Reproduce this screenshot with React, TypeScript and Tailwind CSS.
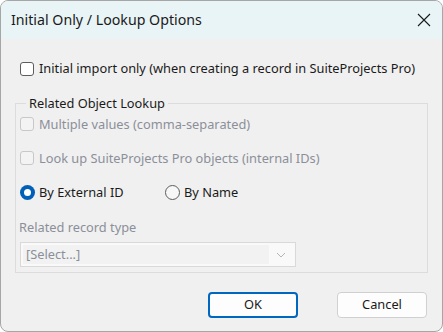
import { useState } from 'react';

const font = { fontFamily: '"Noto Sans", "Segoe UI", sans-serif' };

function Check({ label, disabled, checked, onChange }: { label: string; disabled?: boolean; checked?: boolean; onChange?: () => void }) {
  return (
    <label className={`flex items-center h-[16px] ${disabled ? 'text-[#8b8f99]' : 'text-[#1a1a1a]'}`}>
      <span
        onClick={disabled ? undefined : onChange}
        className={`w-[14px] h-[14px] rounded-[3px] border ${disabled ? 'border-[#c8c8c8] bg-[#f3f3f3]' : 'border-[#5d5d5d] bg-white'} mr-[5px] shrink-0`}
      >
        {checked && (
          <svg viewBox="0 0 14 14" className="w-full h-full">
            <path d="M3 7l3 3 5-6" fill="none" stroke="#1a1a1a" strokeWidth="1.5" />
          </svg>
        )}
      </span>
      {label}
    </label>
  );
}

function Radio({ label, selected, onClick }: { label: string; selected: boolean; onClick: () => void }) {
  return (
    <label className="flex items-center h-[16px] text-[#1a1a1a]" onClick={onClick}>
      {selected ? (
        <span className="w-[15px] h-[15px] rounded-full bg-[#005fb8] flex items-center justify-center mr-[4px] shrink-0">
          <span className="w-[7px] h-[7px] rounded-full bg-white" />
        </span>
      ) : (
        <span className="w-[15px] h-[15px] rounded-full border border-[#5d5d5d] bg-[#f7f7f7] mr-[4px] shrink-0" />
      )}
      {label}
    </label>
  );
}

export default function App() {
  const [initialOnly, setInitialOnly] = useState(false);
  const [mode, setMode] = useState<'ext' | 'name'>('ext');

  return (
    <div className="w-[443px] h-[332px] bg-white" style={font}>
      <div className="w-[443px] h-[332px] rounded-[8px] border border-[#a6a6a6] overflow-hidden flex flex-col bg-[#f0f0f0]">
        {/* title bar */}
        <div className="h-[38px] bg-[#e9f4f7] flex items-center justify-between pl-[10px] pr-[11px] shrink-0">
          <span className="text-[14.2px] text-[#1a1a1a]">Initial Only / Lookup Options</span>
          <svg viewBox="0 0 14 14" className="w-[14px] h-[14px]">
            <path d="M1 1l12 12M13 1L1 13" stroke="#1a1a1a" strokeWidth="1.1" fill="none" />
          </svg>
        </div>

        <div className="flex flex-col pl-[14px] pr-[14px] text-[12.8px]">
          <div className="pl-[5px] pt-[22px]">
            <Check label="Initial import only (when creating a record in SuiteProjects Pro)" checked={initialOnly} onChange={() => setInitialOnly(!initialOnly)} />
          </div>

          {/* group box */}
          <fieldset className="mt-[17px] border border-[#dcdcdc] h-[179px] px-[4px] pb-0 pt-0">
            <legend className="ml-[6px] px-[3px] text-[#1a1a1a]">Related Object Lookup</legend>
            <div className="flex flex-col mt-[3px]">
              <Check label="Multiple values (comma-separated)" disabled />
              <div className="mt-[18px]">
                <Check label="Look up SuiteProjects Pro objects (internal IDs)" disabled />
              </div>
              <div className="flex mt-[18px]">
                <div className="w-[145px]">
                  <Radio label="By External ID" selected={mode === 'ext'} onClick={() => setMode('ext')} />
                </div>
                <Radio label="By Name" selected={mode === 'name'} onClick={() => setMode('name')} />
              </div>
              <div className="mt-[18px] text-[#8b8f99] h-[16px] -ml-[1px]">Related record type</div>
              <div className="mt-[8px] w-[276px] h-[25px] border border-[#d9d9d9] bg-[#f9f9f9] flex items-center p-[2px]">
                <div className="flex-1 h-full bg-[#f2f2f2] flex items-center pl-[3px] text-[#8b8f99]">[Select...]</div>
                <div className="w-[24px] flex items-center justify-center">
                  <svg viewBox="0 0 10 6" className="w-[10px] h-[6px]">
                    <path d="M1 1l4 4 4-4" stroke="#b5b5b5" strokeWidth="1" fill="none" />
                  </svg>
                </div>
              </div>
            </div>
          </fieldset>

          <div className="flex justify-end mt-[19px] gap-[39px] pr-[1px]">
            <button className="w-[90px] h-[26px] rounded-[4px] border-2 border-[#0067c0] bg-[#fdfdfd] text-[#1a1a1a]">OK</button>
            <button className="w-[90px] h-[26px] rounded-[4px] border border-[#d0d0d0] bg-[#fdfdfd] text-[#1a1a1a]">Cancel</button>
          </div>
        </div>
      </div>
    </div>
  );
}
